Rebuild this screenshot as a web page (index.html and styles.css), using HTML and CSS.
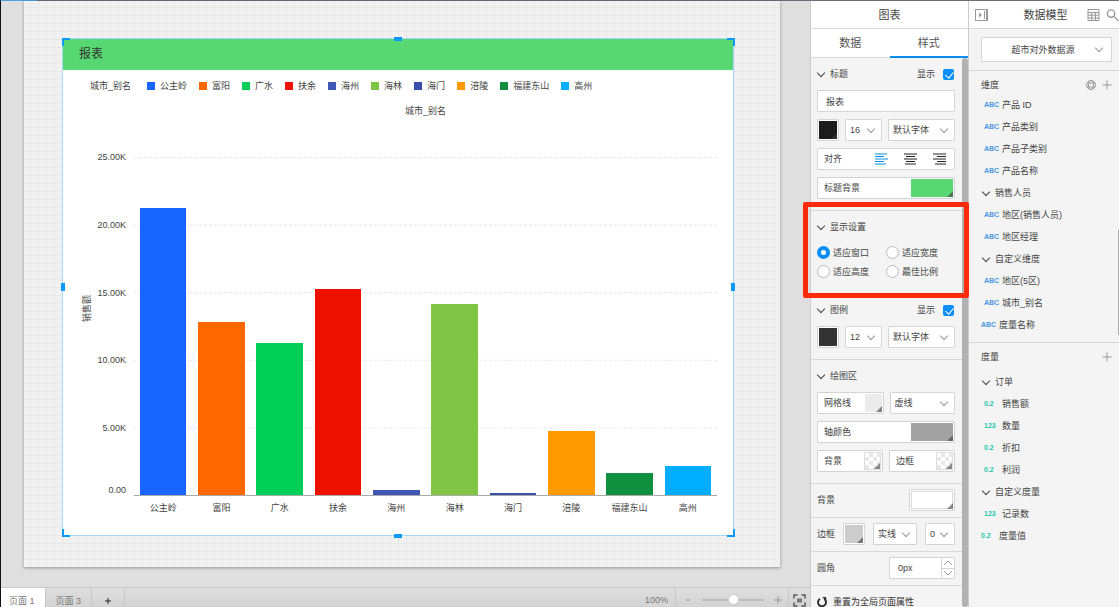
FILE: index.html
```html
<!DOCTYPE html>
<html lang="zh-CN">
<head>
<meta charset="UTF-8">
<meta name="viewport" content="width=device-width, initial-scale=1.0">
<title>报表</title>
<link rel="stylesheet" href="styles.css">
</head>
<body>

<div class="app">
    <main class="main">
        <div class="workspace">
            <div class="page">
                <section class="widget">
                    <h1 class="widget-title">报表</h1>
                    <div class="chart">
                        <ul class="legend">
                            <li class="legend-name">城市_别名</li>
                            <li><i class="c1"></i>公主岭</li>
                            <li><i class="c2"></i>富阳</li>
                            <li><i class="c3"></i>广水</li>
                            <li><i class="c4"></i>扶余</li>
                            <li><i class="c5"></i>海州</li>
                            <li><i class="c6"></i>海林</li>
                            <li><i class="c7"></i>海门</li>
                            <li><i class="c8"></i>涪陵</li>
                            <li><i class="c9"></i>福建东山</li>
                            <li><i class="c10"></i>高州</li>
                        </ul>
                        <div class="x-title">城市_别名</div>
                        <div class="y-title"><span>销售额</span></div>
                        <ul class="ticks">
                            <li>25.00K</li>
                            <li>20.00K</li>
                            <li>15.00K</li>
                            <li>10.00K</li>
                            <li>5.00K</li>
                            <li>0.00</li>
                        </ul>
                        <div class="plot">
                            <div class="col"><div class="bar c1" style="height: 84.8%"></div></div>
                            <div class="col"><div class="bar c2" style="height: 51.2%"></div></div>
                            <div class="col"><div class="bar c3" style="height: 45%"></div></div>
                            <div class="col"><div class="bar c4" style="height: 60.9%"></div></div>
                            <div class="col"><div class="bar c5" style="height: 1.4%"></div></div>
                            <div class="col"><div class="bar c6" style="height: 56.6%"></div></div>
                            <div class="col"><div class="bar c7" style="height: 0.7%"></div></div>
                            <div class="col"><div class="bar c8" style="height: 19%"></div></div>
                            <div class="col"><div class="bar c9" style="height: 6.5%"></div></div>
                            <div class="col"><div class="bar c10" style="height: 8.6%"></div></div>
                        </div>
                        <ul class="x-labels">
                            <li>公主岭</li>
                            <li>富阳</li>
                            <li>广水</li>
                            <li>扶余</li>
                            <li>海州</li>
                            <li>海林</li>
                            <li>海门</li>
                            <li>涪陵</li>
                            <li>福建东山</li>
                            <li>高州</li>
                        </ul>
                    </div>
                    <!-- Resize handles -->
                    <span class="handle nw"></span>
                    <span class="handle ne"></span>
                    <span class="handle sw"></span>
                    <span class="handle se"></span>
                    <span class="handle n"></span>
                    <span class="handle s"></span>
                    <span class="handle w"></span>
                    <span class="handle e"></span>
                </section>
            </div>
        </div>
        <footer class="statusbar">
            <button class="page-tab active">页面 1</button>
            <button class="page-tab">页面 3</button>
            <button class="page-tab add" aria-label="添加页面"><svg viewBox="0 0 6 6"><path d="M3 0v6M0 3h6"/></svg></button>
            <span class="zoom-value">100%</span>
            <div class="zoom">
                <button class="zoom-btn" aria-label="缩小"><svg viewBox="0 0 8 8"><path d="M2 4h4"/></svg></button>
                <input type="range" class="zoom-range" min="0" max="200" value="100" aria-label="缩放">
                <button class="zoom-btn" aria-label="放大"><svg viewBox="0 0 8 8"><path d="M4 0v8M0 4h8"/></svg></button>
            </div>
            <button class="fit" aria-label="适应屏幕"><svg viewBox="0 0 13 13"><path d="M1 4.5V1h3.500M8.500 1H12v3.500M12 8.500V12H8.500M4.500 12H1V8.500"/><rect x="4" y="4.500" width="5" height="4"/></svg></button>
        </footer>
    </main>

    <aside class="style-panel">
        <header class="panel-header">图表</header>
        <nav class="tabs">
            <button>数据</button>
            <button class="active">样式</button>
        </nav>
        <div class="style-body">
            <div class="sections">
                <section class="section">
                    <div class="section-head">
                        <h2>标题</h2>
                        <label for="showTitle">显示</label>
                        <input type="checkbox" id="showTitle" checked>
                    </div>
                    <div class="rows">
                        <input type="text" class="text-input" value="报表" aria-label="标题">
                        <div class="row">
                            <button class="swatch framed black" aria-label="标题颜色"></button>
                            <span class="select size"><select aria-label="标题字号"><option>16</option></select></span>
                            <span class="select grow"><select aria-label="标题字体"><option>默认字体</option></select></span>
                        </div>
                        <div class="field">
                            <span>对齐</span>
                            <div class="align">
                                <button class="active" aria-label="左对齐"><svg viewBox="0 0 13 12"><path d="M0 1h12M0 3.500h9M0 6h13M0 8.500h9M0 11h11"/></svg></button>
                                <button aria-label="居中"><svg viewBox="0 0 13 12"><path d="M0 1h13M2 3.500h9M0 6h13M2 8.500h9M1 11h11"/></svg></button>
                                <button aria-label="右对齐"><svg viewBox="0 0 13 12"><path d="M0 1h13M4 3.500h9M0 6h13M4 8.500h9M2 11h11"/></svg></button>
                            </div>
                        </div>
                        <div class="field">
                            <span>标题背景</span>
                            <button class="swatch wide green" aria-label="标题背景"></button>
                        </div>
                    </div>
                </section>
                <section class="section fit-section">
                    <div class="section-head"><h2>显示设置</h2></div>
                    <div class="radios">
                        <label><input type="radio" name="fit" checked>适应窗口</label>
                        <label><input type="radio" name="fit">适应宽度</label>
                        <label><input type="radio" name="fit">适应高度</label>
                        <label><input type="radio" name="fit">最佳比例</label>
                    </div>
                    <span class="highlight"></span>
                </section>
                <section class="section">
                    <div class="section-head">
                        <h2>图例</h2>
                        <label for="showLegend">显示</label>
                        <input type="checkbox" id="showLegend" checked>
                    </div>
                    <div class="rows">
                        <div class="row">
                            <button class="swatch framed dark" aria-label="图例颜色"></button>
                            <span class="select size"><select aria-label="图例字号"><option>12</option></select></span>
                            <span class="select grow"><select aria-label="图例字体"><option>默认字体</option></select></span>
                        </div>
                    </div>
                </section>
                <section class="section">
                    <div class="section-head"><h2>绘图区</h2></div>
                    <div class="rows">
                        <div class="row">
                            <div class="field grow"><span>网格线</span><button class="swatch light" aria-label="网格线颜色"></button></div>
                            <span class="select grow"><select aria-label="网格线样式"><option>虚线</option></select></span>
                        </div>
                        <div class="field">
                            <span>轴颜色</span>
                            <button class="swatch wide gray" aria-label="轴颜色"></button>
                        </div>
                        <div class="row">
                            <div class="field grow"><span>背景</span><button class="swatch none" aria-label="绘图区背景"></button></div>
                            <div class="field grow"><span>边框</span><button class="swatch none" aria-label="绘图区边框"></button></div>
                        </div>
                    </div>
                </section>
                <section class="section line">
                    <span>背景</span>
                    <button class="swatch framed long white" aria-label="背景"></button>
                </section>
                <section class="section line">
                    <span>边框</span>
                    <button class="swatch framed silver" aria-label="边框颜色"></button>
                    <span class="select style"><select aria-label="边框样式"><option>实线</option></select></span>
                    <span class="select width"><select aria-label="边框宽度"><option>0</option></select></span>
                </section>
                <section class="section line">
                    <label for="radius">圆角</label>
                    <div class="spinner">
                        <input type="text" id="radius" value="0px">
                        <div class="steps">
                            <button aria-label="增加"><svg viewBox="0 0 8 4"><path d="M0 4l4-4 4 4"/></svg></button>
                            <button aria-label="减少"><svg viewBox="0 0 8 4"><path d="M0 0l4 4 4-4"/></svg></button>
                        </div>
                    </div>
                </section>
                <section class="section">
                    <button class="reset"><svg viewBox="0 0 10 10"><path d="M3 1.800A4 4 0 1 0 7.200 1.900"/><path class="tip" d="M5.200 0h4v4z"/></svg>重置为全局页面属性</button>
                </section>
            </div>
            <div class="scrollbar"></div>
        </div>
    </aside>

    <aside class="model-panel">
        <header class="panel-header model-header">
            <button class="icon-btn" aria-label="收起"><svg class="collapse" viewBox="0 0 13 12"><rect x=".5" y=".5" width="12" height="11"/><path class="solid" d="M4 3.500v5l3-2.500z"/><path class="bars" d="M9.500 2v8M11.500 0v12"/></svg></button>
            <span>数据模型</span>
            <button class="icon-btn" aria-label="表格"><svg class="grid-icon" viewBox="0 0 12 12"><path d="M.5.500h11v11H.5zM.5 3.500h11M.5 6.200h11M.5 9h11M4.200 3.500v8M8 3.500v8"/></svg></button>
            <button class="icon-btn search" aria-label="搜索"><svg viewBox="0 0 13 13"><circle cx="5" cy="5" r="4"/><path d="M8 8l5 5"/></svg></button>
        </header>
        <div class="source">
            <span class="select"><select aria-label="数据源"><option>超市对外数据源</option></select></span>
        </div>
        <section class="model-section dims">
            <div class="model-head">
                <h2>维度</h2>
                <button class="icon-btn" aria-label="地理"><svg class="globe" viewBox="0 0 10 10"><circle cx="5" cy="5" r="4.500"/><ellipse cx="5" cy="5" rx="2.500" ry="4.500"/><path d="M1 3h8M1 7h8"/></svg></button>
                <button class="icon-btn" aria-label="添加维度"><svg viewBox="0 0 10 10"><path d="M5 .500v9M.5 5h9"/></svg></button>
            </div>
            <ul class="tree">
                <li><i class="abc">ABC</i>产品 ID</li>
                <li><i class="abc">ABC</i>产品类别</li>
                <li><i class="abc">ABC</i>产品子类别</li>
                <li><i class="abc">ABC</i>产品名称</li>
                <li class="group">销售人员</li>
                <li><i class="abc">ABC</i>地区(销售人员)</li>
                <li><i class="abc">ABC</i>地区经理</li>
                <li class="group">自定义维度</li>
                <li><i class="abc">ABC</i>地区(5区)</li>
                <li><i class="abc">ABC</i>城市_别名</li>
                <li class="top"><i class="abc">ABC</i>度量名称</li>
            </ul>
            <span class="thumb"></span>
        </section>
        <section class="model-section">
            <div class="model-head">
                <h2>度量</h2>
                <button class="icon-btn" aria-label="添加度量"><svg viewBox="0 0 10 10"><path d="M5 .500v9M.5 5h9"/></svg></button>
            </div>
            <ul class="tree measures">
                <li class="group">订单</li>
                <li><i class="num">0.2</i>销售额</li>
                <li><i class="num">123</i>数量</li>
                <li><i class="num">0.2</i>折扣</li>
                <li><i class="num">0.2</i>利润</li>
                <li class="group">自定义度量</li>
                <li><i class="num">123</i>记录数</li>
                <li class="top"><i class="num">0.2</i>度量值</li>
            </ul>
        </section>
    </aside>
</div>

</body>
</html>
```
FILE: styles.css
```css
* {
    box-sizing: border-box;
}
body {
    margin: 0;
    overflow: hidden;
    background-color: #dfdfdf;
    color: #444;
    font: 9px/12px "Liberation Sans", "Noto Sans CJK SC", sans-serif;
}
button, input, select {
    margin: 0;
    padding: 0;
    border: none;
    border-radius: 0;
    background: none;
    color: inherit;
    font: inherit;
    appearance: none;
}
button {
    cursor: pointer;
}
ul {
    margin: 0;
    padding: 0;
    list-style: none;
}
h1, h2 {
    margin: 0;
    font-size: inherit;
    font-weight: normal;
}
svg {
    display: block;
    fill: none;
    stroke: currentColor;
}
.app {
    display: flex;
    height: 100vh;
    border-top: 1px solid #6c6e76;
    border-left: 1px solid #111;
}

/* Canvas */
.main {
    flex: 1;
    min-width: 0;
    display: flex;
    flex-direction: column;
}
.main::before {
    content: "";
    width: 36px;
    height: 1px;
    margin-top: -1px;
    background-color: #4ba3e3;
}
.workspace {
    flex: 1;
    display: flex;
    padding: 0 30px 20px 23px;
}
.page {
    flex: 1;
    display: flex;
    padding: 37px 46px 31px 38px;
    background-color: #f1f1f1;
    background-image: linear-gradient(#e8e8e8 1px, transparent 1px), linear-gradient(90deg, #e8e8e8 1px, transparent 1px);
    background-size: 8px 8px;
    background-position: 6px 6px;
    box-shadow: 0 1px 3px rgba(0, 0, 0, 0.35);
}
.widget {
    position: relative;
    flex: 1;
    display: flex;
    flex-direction: column;
    border: 1px solid #a9d8fb;
    background-color: white;
}
.widget-title {
    padding: 0 16px;
    background-color: #58d873;
    color: #333;
    font-size: 12px;
    line-height: 31px;
}
.handle {
    position: absolute;
    border: 0 solid #0a9bfa;
}
.nw, .ne, .sw, .se {
    width: 8px;
    height: 8px;
}
.nw {
    top: -1px;
    left: -1px;
    border-width: 2px 0 0 2px;
}
.ne {
    top: -1px;
    right: -2px;
    border-width: 2px 2px 0 0;
}
.sw {
    bottom: -2px;
    left: -1px;
    border-width: 0 0 2px 2px;
}
.se {
    right: -2px;
    bottom: -2px;
    border-width: 0 2px 2px 0;
}
.n, .s {
    left: calc(50% - 4px);
    width: 8px;
    border-top-width: 4px;
}
.n {
    top: -2px;
}
.s {
    bottom: -3px;
}
.w, .e {
    top: calc(50% - 4px);
    height: 8px;
    border-left-width: 4px;
}
.w {
    left: -2px;
}
.e {
    right: -2px;
}

/* Chart */
.chart {
    flex: 1;
    display: grid;
    grid-template-columns: 18px 37px 1fr;
    grid-template-rows: 31px 20px 36px 1fr 39px;
    padding: 0 16px;
}
.legend {
    grid-column: 1 / 4;
    display: flex;
    align-items: center;
    gap: 12px;
    padding-left: 11px;
}
.legend li {
    display: flex;
    align-items: center;
    gap: 5px;
}
.legend .legend-name {
    margin-right: 4px;
}
.legend i {
    width: 8px;
    height: 8px;
}
.x-title {
    grid-column: 3;
    align-self: center;
    text-align: center;
}
.y-title {
    grid-column: 1 / 3;
    grid-row: 3 / 5;
    display: flex;
    align-items: center;
    padding-left: 2px;
}
.y-title span {
    writing-mode: vertical-rl;
    text-orientation: sideways;
    transform: rotate(180deg);
}
.ticks {
    grid-column: 1 / 3;
    grid-row: 4;
    display: flex;
    flex-direction: column;
    text-align: right;
    padding-right: 8px;
}
.ticks li {
    flex: 1;
    margin-top: -6px;
    margin-bottom: 6px;
}
.ticks li:last-child {
    flex: none;
    height: 12px;
    margin: -12px 0 0;
}
.plot {
    grid-column: 3;
    grid-row: 4;
    display: flex;
    border-bottom: 1px solid #aaa;
    background: repeating-linear-gradient(90deg, transparent 0 3px, white 3px 5px), linear-gradient(#e8e8e8 1px, transparent 1px);
    background-size: auto, 100% 20%;
}
.col {
    flex: 1;
    display: flex;
    align-items: flex-end;
    justify-content: center;
}
.bar {
    width: 80%;
}
.x-labels {
    grid-column: 3;
    grid-row: 5;
    display: flex;
    padding-top: 6px;
}
.x-labels li {
    flex: 1;
    text-align: center;
}
.c1 { background-color: #1865ff; }
.c2 { background-color: #ff6700; }
.c3 { background-color: #02cf58; }
.c4 { background-color: #ee1100; }
.c5 { background-color: #3f58b5; }
.c6 { background-color: #80c545; }
.c7 { background-color: #3950ab; }
.c8 { background-color: #ff9b00; }
.c9 { background-color: #109140; }
.c10 { background-color: #00adff; }

/* Status bar */
.statusbar {
    display: flex;
    height: 20px;
    border-top: 1px solid #c8c8c8;
    background: linear-gradient(#dedede, #d3d3d3);
    color: #777;
}
.page-tab {
    padding: 6px 10px 0;
    border-right: 1px solid #c8c8c8;
}
.page-tab.active {
    padding-left: 8px;
    background-color: white;
}
.page-tab.add {
    padding: 6px 13px 0;
    color: #222;
}
.add svg {
    width: 6px;
    height: 6px;
}
.zoom-value {
    margin-left: auto;
    padding: 6px 7px 0 0;
}
.zoom {
    display: flex;
    align-items: center;
    gap: 10px;
    padding: 5px 6px 0 8px;
    border-left: 1px solid #c8c8c8;
    border-right: 1px solid #c8c8c8;
}
.zoom-btn {
    color: #999;
}
.zoom-btn svg {
    width: 8px;
    height: 8px;
}
.zoom-range {
    width: 62px;
    height: 12px;
}
.zoom-range::-webkit-slider-runnable-track {
    height: 2px;
    background-color: #bcbcbc;
}
.zoom-range::-webkit-slider-thumb {
    appearance: none;
    width: 11px;
    height: 11px;
    margin-top: -5px;
    border: 1px solid #ccc;
    border-radius: 50%;
    background-color: white;
}
.fit {
    padding: 6px 4px 0;
}
.fit svg {
    width: 13px;
    height: 13px;
    stroke-width: 2;
}
.fit rect {
    fill: currentColor;
    stroke: none;
}

/* Side panels */
.style-panel, .model-panel {
    display: flex;
    flex-direction: column;
    border-left: 1px solid #ccc;
    background-color: #f4f4f4;
}
.style-panel {
    width: 158px;
}
.model-panel {
    position: relative;
    width: 151px;
}
.panel-header {
    flex: none;
    height: 28px;
    border-bottom: 1px solid #d8d8d8;
    background-color: white;
    font-size: 11px;
    line-height: 28px;
    text-align: center;
}
.tabs {
    flex: none;
    display: flex;
    height: 29px;
    border-bottom: 1px solid #d8d8d8;
    background-color: white;
    color: #555;
    font-size: 11px;
}
.tabs button {
    flex: 1;
    height: 29px;
    border-bottom: 1px solid #d8d8d8;
}
.tabs .active {
    border-bottom: 2px solid #0a8ff0;
}
.style-body {
    flex: 1;
    min-height: 0;
    display: flex;
}
.sections {
    flex: 1;
}
.scrollbar {
    width: 6px;
    border-radius: 3px;
    background-color: #b2b2b2;
}
.section {
    padding: 0 7px 11px 6px;
    border-top: 1px solid #d8d8d8;
}
.section:first-child {
    border-top: none;
}
.section-head {
    display: flex;
    align-items: center;
    gap: 8px;
    height: 32px;
    padding: 0 1px;
}
.section-head h2 {
    display: flex;
    align-items: center;
    gap: 5px;
    flex: 1;
}
.section-head h2::before, .group::before {
    content: "";
    width: 5px;
    height: 5px;
    margin: -3px 1px 0 1px;
    border: solid #444;
    border-width: 0 1px 1px 0;
    transform: rotate(45deg);
}
.section-head h2::before {
    margin-left: 0;
}
input[type="checkbox"] {
    width: 11px;
    height: 11px;
    border-radius: 2px;
    background-color: #0a8ffa;
}
input[type="checkbox"]::after {
    content: "";
    display: block;
    width: 4px;
    height: 7px;
    margin: 1px 0 0 4px;
    border: solid white;
    border-width: 0 1px 1px 0;
    transform: rotate(40deg);
}
.rows {
    display: flex;
    flex-direction: column;
    gap: 7px;
}
.row {
    display: flex;
    gap: 6px;
}
.grow {
    flex: 1;
}
.text-input, .field, .select, .framed, .spinner {
    height: 22px;
    border: 1px solid #d4d4d4;
    border-radius: 1px;
    background-color: white;
}
.text-input {
    width: 100%;
    padding: 0 8px;
}
.field {
    display: flex;
    align-items: center;
    justify-content: space-between;
    padding: 0 1px 0 6px;
}
.select {
    display: flex;
    align-items: center;
    padding-right: 6px;
}
.select select {
    flex: 1;
    width: 0;
    height: 20px;
    padding-left: 4px;
}
.select::after {
    content: "";
    width: 5px;
    height: 5px;
    margin: -3px 1px 0 0;
    border: solid #999;
    border-width: 0 1px 1px 0;
    transform: rotate(45deg);
}
.size {
    width: 37px;
}
.style {
    width: 44px;
}
.width {
    width: 30px;
}
.align {
    display: flex;
    gap: 16px;
    padding-right: 7px;
    color: #222;
}
.align .active {
    color: #0a8fe8;
}
.align svg {
    width: 13px;
    height: 12px;
}
.swatch {
    position: relative;
    width: 17px;
    height: 18px;
    background-clip: content-box;
}
.swatch::after {
    content: "";
    position: absolute;
    right: 0;
    bottom: 0;
    border: solid transparent;
    border-width: 3px;
    border-right-color: rgba(60, 60, 60, 0.6);
    border-bottom-color: rgba(60, 60, 60, 0.6);
}
.wide {
    width: 42px;
}
.framed {
    width: 22px;
    height: 22px;
    padding: 0;
    box-shadow: inset 0 0 0 1px white;
    background-clip: padding-box;
}
.framed::after {
    right: 1px;
    bottom: 1px;
}
.long {
    width: 46px;
    box-shadow: inset 0 0 0 1px white, inset 0 0 0 2px #ddd;
}
.black { background-color: #1c1c1c; }
.dark { background-color: #333; }
.green { background-color: #58d873; }
.light { background-color: #ebebeb; }
.gray { background-color: #a2a2a2; }
.silver { background-color: #ccc; }
.white { background-color: white; }
.none {
    border: 1px solid #ddd;
    background: repeating-conic-gradient(#e8e8e8 0 25%, white 0 50%) 0 0 / 8px 8px;
}
.fit-section {
    position: relative;
    padding-bottom: 12px;
}
.radios {
    display: grid;
    grid-template-columns: 1fr 1fr;
}
.radios label {
    display: flex;
    align-items: center;
    gap: 3px;
    height: 19px;
}
input[type="radio"] {
    width: 13px;
    height: 13px;
    border: 1px solid #bbb;
    border-radius: 50%;
    background-color: white;
}
input[type="radio"]:checked {
    border: 4px solid #0a8ffa;
}
.highlight {
    position: absolute;
    z-index: 1;
    top: -9px;
    right: -7px;
    bottom: -5px;
    left: -8px;
    border: 5px solid #ff2a0a;
    border-radius: 2px;
    pointer-events: none;
}
.line {
    display: flex;
    align-items: center;
    justify-content: space-between;
    padding-top: 5px;
    padding-bottom: 6px;
}
.spinner {
    display: flex;
    width: 66px;
}
.spinner input {
    flex: 1;
    width: 0;
    padding-left: 8px;
}
.steps {
    display: flex;
    flex-direction: column;
    width: 13px;
    border-left: 1px solid #d4d4d4;
    color: #999;
}
.steps button {
    flex: 1;
    padding: 0 2px;
}
.steps button + button {
    border-top: 1px solid #d4d4d4;
}
.steps svg {
    width: 8px;
    height: 4px;
}
.reset {
    display: flex;
    align-items: center;
    gap: 6px;
    height: 32px;
    color: #333;
}
.reset svg {
    width: 10px;
    height: 10px;
    stroke-width: 2;
}
.reset .tip {
    fill: currentColor;
    stroke: none;
}

/* Data model */
.model-header {
    display: flex;
    align-items: center;
    padding: 0 0 0 6px;
}
.model-header span {
    flex: 1;
    padding-left: 16px;
}
.icon-btn {
    color: #999;
}
.model-header svg {
    width: 13px;
    height: 12px;
}
.model-header .search {
    margin-left: 6px;
}
.search svg {
    stroke-width: 1.5;
}
.solid {
    fill: currentColor;
    stroke: none;
}
.source {
    padding: 8px 7px 8px 12px;
}
.source .select {
    height: 25px;
    padding-right: 8px;
}
.source select {
    padding-left: 8px;
    text-align: center;
    text-align-last: center;
}
.model-section {
    position: relative;
    border-top: 1px solid #d8d8d8;
    padding-bottom: 6px;
}
.model-head {
    display: flex;
    align-items: center;
    gap: 6px;
    height: 27px;
    padding: 0 7px 0 12px;
}
.model-head h2 {
    flex: 1;
}
.model-head svg {
    width: 10px;
    height: 10px;
}
.tree {
    margin-top: -4px;
}
.measures {
    margin-top: 1px;
}
.tree li {
    display: flex;
    align-items: center;
    height: 22px;
    padding-left: 15px;
}
.tree i {
    width: 18px;
    font-style: normal;
    font-weight: bold;
    font-size: 7px;
}
.tree .group {
    gap: 5px;
    padding-left: 13px;
}
.tree .top {
    padding-left: 12px;
}
.tree .abc {
    color: #4a96e0;
    font-family: "Liberation Sans Narrow", "Liberation Sans", sans-serif;
    font-size: 7px;
}
.num {
    color: #1fc9ac;
}
.thumb {
    position: absolute;
    right: 0;
    bottom: 7px;
    width: 1px;
    height: 105px;
    background-color: #aaa;
}
```
